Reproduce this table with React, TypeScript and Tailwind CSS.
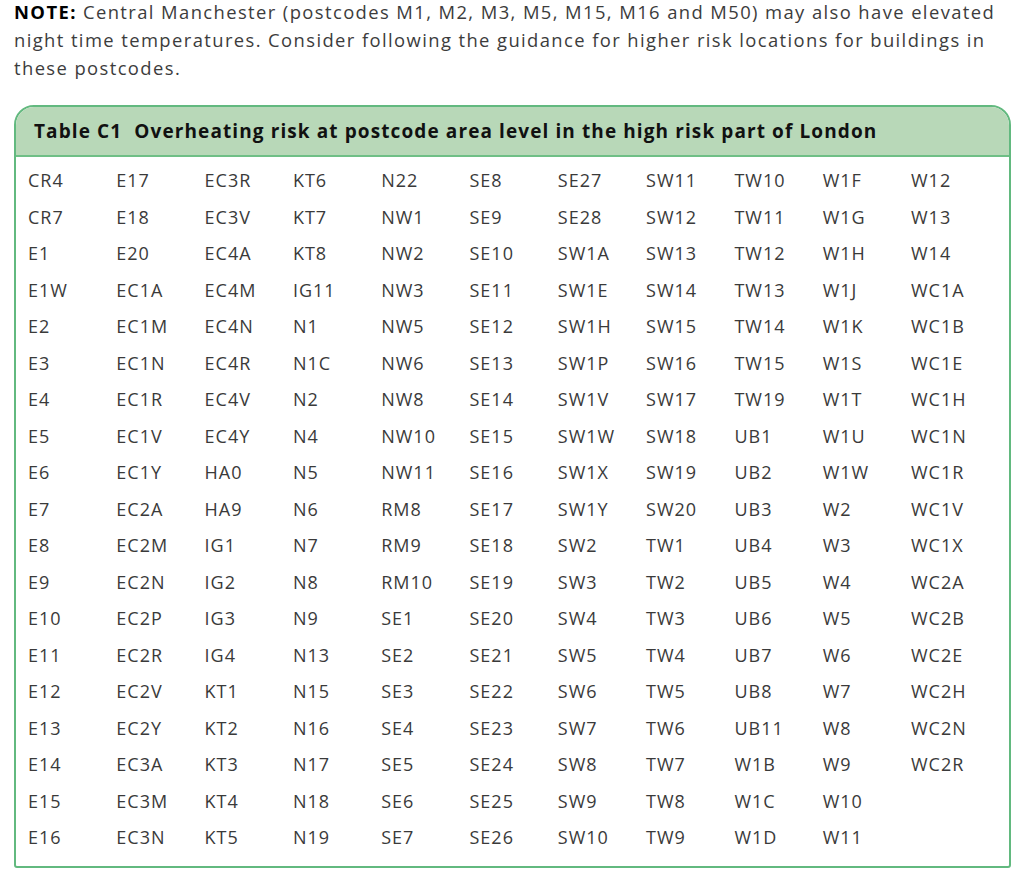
import type { JSX } from 'react';

const COLUMNS: readonly (readonly string[])[] = [
  ['CR4', 'CR7', 'E1', 'E1W', 'E2', 'E3', 'E4', 'E5', 'E6', 'E7', 'E8', 'E9', 'E10', 'E11', 'E12', 'E13', 'E14', 'E15', 'E16'],
  ['E17', 'E18', 'E20', 'EC1A', 'EC1M', 'EC1N', 'EC1R', 'EC1V', 'EC1Y', 'EC2A', 'EC2M', 'EC2N', 'EC2P', 'EC2R', 'EC2V', 'EC2Y', 'EC3A', 'EC3M', 'EC3N'],
  ['EC3R', 'EC3V', 'EC4A', 'EC4M', 'EC4N', 'EC4R', 'EC4V', 'EC4Y', 'HA0', 'HA9', 'IG1', 'IG2', 'IG3', 'IG4', 'KT1', 'KT2', 'KT3', 'KT4', 'KT5'],
  ['KT6', 'KT7', 'KT8', 'IG11', 'N1', 'N1C', 'N2', 'N4', 'N5', 'N6', 'N7', 'N8', 'N9', 'N13', 'N15', 'N16', 'N17', 'N18', 'N19'],
  ['N22', 'NW1', 'NW2', 'NW3', 'NW5', 'NW6', 'NW8', 'NW10', 'NW11', 'RM8', 'RM9', 'RM10', 'SE1', 'SE2', 'SE3', 'SE4', 'SE5', 'SE6', 'SE7'],
  ['SE8', 'SE9', 'SE10', 'SE11', 'SE12', 'SE13', 'SE14', 'SE15', 'SE16', 'SE17', 'SE18', 'SE19', 'SE20', 'SE21', 'SE22', 'SE23', 'SE24', 'SE25', 'SE26'],
  ['SE27', 'SE28', 'SW1A', 'SW1E', 'SW1H', 'SW1P', 'SW1V', 'SW1W', 'SW1X', 'SW1Y', 'SW2', 'SW3', 'SW4', 'SW5', 'SW6', 'SW7', 'SW8', 'SW9', 'SW10'],
  ['SW11', 'SW12', 'SW13', 'SW14', 'SW15', 'SW16', 'SW17', 'SW18', 'SW19', 'SW20', 'TW1', 'TW2', 'TW3', 'TW4', 'TW5', 'TW6', 'TW7', 'TW8', 'TW9'],
  ['TW10', 'TW11', 'TW12', 'TW13', 'TW14', 'TW15', 'TW19', 'UB1', 'UB2', 'UB3', 'UB4', 'UB5', 'UB6', 'UB7', 'UB8', 'UB11', 'W1B', 'W1C', 'W1D'],
  ['W1F', 'W1G', 'W1H', 'W1J', 'W1K', 'W1S', 'W1T', 'W1U', 'W1W', 'W2', 'W3', 'W4', 'W5', 'W6', 'W7', 'W8', 'W9', 'W10', 'W11'],
  ['W12', 'W13', 'W14', 'WC1A', 'WC1B', 'WC1E', 'WC1H', 'WC1N', 'WC1R', 'WC1V', 'WC1X', 'WC2A', 'WC2B', 'WC2E', 'WC2H', 'WC2N', 'WC2R'],
];

const ROW_COUNT = 19;

// the grid fills row by row, so read the columns across
const CELLS: string[] = Array.from({ length: ROW_COUNT }, (_, row) =>
  COLUMNS.map((column) => column[row] ?? '')
).flat();

export default function App(): JSX.Element {
  return (
    <div className="min-h-[878px] bg-white pl-[14px] font-['Open_Sans','Liberation_Sans',sans-serif]">
      <p className="-mt-[2px] whitespace-nowrap text-[18.4px] leading-[28px] tracking-[1.4px] text-[#3c3c3c]">
        <strong className="font-bold text-black">NOTE:</strong> Central Manchester (postcodes M1, M2, M3, M5, M15, M16 and M50) may also have elevated
        <br />
        night time temperatures. Consider following the guidance for higher risk locations for buildings in
        <br />
        these postcodes.
      </p>

      <section className="mt-[23px] w-[997px] overflow-hidden rounded-t-[20px] rounded-b-[3px] border-2 border-[#62b97f]">
        <header className="flex h-[50px] items-center border-b-2 border-[#6fbf86] bg-[#b8d8b8] pl-[18px]">
          <h2 className="text-[19px] font-bold tracking-[1.1px] text-[#111]">
            Table C1&nbsp; Overheating risk at postcode area level in the high risk part of London
          </h2>
        </header>
        <div className="grid grid-cols-[repeat(11,88.3px)] pt-[5px] pb-[10px] pl-[12px]">
          {CELLS.map((code, index) => (
            <span key={index} className="h-[36.5px] text-[18px] leading-[36.5px] tracking-[1px] text-[#3a3a3a]">
              {code}
            </span>
          ))}
        </div>
      </section>
    </div>
  );
}
